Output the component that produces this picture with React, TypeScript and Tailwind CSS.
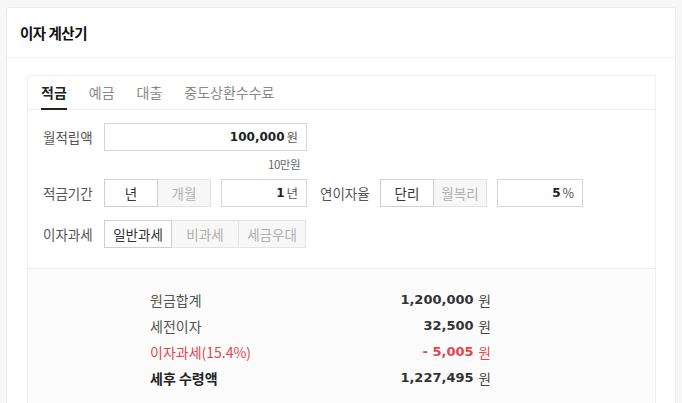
import React from 'react'

const KR = "font-['Noto_Sans_CJK_KR','Noto_Sans',sans-serif]"
const NUM = "font-['DejaVu_Sans','Noto_Sans_CJK_KR',sans-serif]"

function Toggle({ items, widths }: { items: string[]; widths: string[] }) {
  return (
    <div className="flex">
      {items.map((item, i) => (
        <div
          key={item}
          className={
            'h-[28px] flex items-center justify-center text-[13.5px] border ' +
            widths[i] +
            (i === 0
              ? ' bg-white border-[#cfcfcf] text-[#333]'
              : ' bg-[#f7f7f7] border-[#e3e3e3] border-l-0 text-[#b0b0b0]')
          }
        >
          {item}
        </div>
      ))}
    </div>
  )
}

function NumInput({ value, unit, width }: { value: string; unit: string; width: string }) {
  return (
    <div className={'h-[28px] border border-[#d5d5d5] bg-white flex items-center justify-end pr-[8px] ' + width}>
      <span className={NUM + ' font-bold text-[12px] text-[#222]'}>{value}</span>
      <span className="text-[12.5px] text-[#555] ml-[2px]">{unit}</span>
    </div>
  )
}

function ResultRow({ label, value, red, bold }: { label: string; value: string; red?: boolean; bold?: boolean }) {
  return (
    <div className="flex items-center h-[26px]">
      <span
        className={
          'w-[200px] text-[14px] ' +
          (red ? 'text-[#e0474c]' : bold ? 'text-[#222] font-bold' : 'text-[#555]')
        }
      >
        {label}
      </span>
      <span className="flex-1 flex items-center justify-end">
        <span className={NUM + ' font-bold text-[13px] ' + (red ? 'text-[#e0474c]' : 'text-[#333]')}>{value}</span>
        <span className={'text-[13.5px] ml-[5px] ' + (red ? 'text-[#e0474c]' : 'text-[#444]')}>원</span>
      </span>
    </div>
  )
}

export default function App() {
  return (
    <div className={KR + ' w-[682px] h-[403px] bg-[#f7f7f8] pt-[7px] pl-[6px] overflow-hidden'}>
      {/* Outer card */}
      <div className="w-[670px] h-[420px] bg-white border border-[#ececec] rounded-[3px]">
        {/* Header */}
        <div className="h-[50px] border-b border-[#f0f0f0] flex items-center pl-[13px]">
          <h1 className="text-[14.5px] font-bold text-[#111] tracking-[-0.5px]">이자 계산기</h1>
        </div>

        {/* Inner card */}
        <div className="mt-[17px] ml-[20px] w-[629px] h-[360px] border border-[#efefef]">
          {/* Tabs */}
          <div className="h-[34px] border-b border-[#eeeeee] flex items-end pl-[13px] gap-[22px] text-[14px]">
            <div className="h-full flex items-center border-b-2 border-[#222] text-[#222] font-bold -mb-[1px]">적금</div>
            <div className="h-full flex items-center text-[#888]">예금</div>
            <div className="h-full flex items-center text-[#888]">대출</div>
            <div className="h-full flex items-center text-[#888]">중도상환수수료</div>
          </div>

          {/* Form */}
          <div className="pt-[13px] pl-[15px] pb-[20px] text-[#555]">
            <div className="flex items-center">
              <span className="w-[61px] text-[13.5px]">월적립액</span>
              <NumInput value="100,000" unit="원" width="w-[203px]" />
            </div>
            <div className="w-[264px] h-[28px] flex items-center justify-end pr-[7px] text-[11.5px] text-[#666] tracking-[-0.5px]">
              10만원
            </div>
            <div className="flex items-center">
              <span className="w-[61px] text-[13.5px]">적금기간</span>
              <Toggle items={['년', '개월']} widths={['w-[54px]', 'w-[53px]']} />
              <div className="ml-[10px]">
                <NumInput value="1" unit="년" width="w-[86px]" />
              </div>
              <span className="ml-[13px] w-[60px] text-[13.5px]">연이자율</span>
              <Toggle items={['단리', '월복리']} widths={['w-[54px]', 'w-[53px]']} />
              <div className="ml-[10px]">
                <NumInput value="5" unit="%" width="w-[86px]" />
              </div>
            </div>
            <div className="flex items-center mt-[13px]">
              <span className="w-[61px] text-[13.5px]">이자과세</span>
              <Toggle items={['일반과세', '비과세', '세금우대']} widths={['w-[68px]', 'w-[67px]', 'w-[67px]']} />
            </div>
          </div>

          {/* Results */}
          <div className="border-t border-[#ececec] bg-[#fbfbfb] h-[200px] pt-[18px] pl-[122px]">
            <div className="w-[341px]">
              <ResultRow label="원금합계" value="1,200,000" />
              <ResultRow label="세전이자" value="32,500" />
              <ResultRow label="이자과세(15.4%)" value="- 5,005" red />
              <ResultRow label="세후 수령액" value="1,227,495" bold />
            </div>
          </div>
        </div>
      </div>
    </div>
  )
}
